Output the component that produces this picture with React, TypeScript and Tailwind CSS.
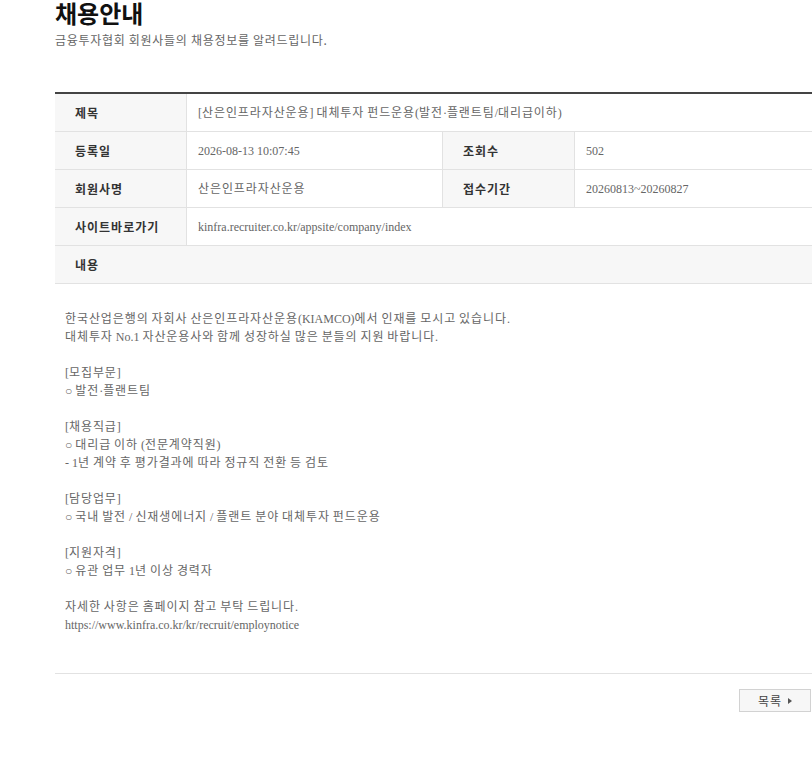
import React from 'react';

const font = 'font-["Liberation_Serif","Noto_Sans_CJK_KR",serif]';
const sans = 'font-["Noto_Sans_CJK_KR","Noto_Sans",sans-serif]';

// 한글 구간만 자간을 살짝 넓혀준다 (원본 폰트 폭 맞추기)
const K: React.FC<{ text: string }> = ({ text }) => (
    <span className="whitespace-pre">
        {text.split(/([\uAC00-\uD7A3\u3131-\u318E]+)/).map((part, i) =>
            /[\uAC00-\uD7A3\u3131-\u318E]/.test(part) ? (
                <span key={i} className="tracking-[0.9px]">{part}</span>
            ) : (
                <React.Fragment key={i}>{part}</React.Fragment>
            )
        )}
    </span>
);

const Label: React.FC<{ children: string }> = ({ children }) => (
    <div className={`h-[38px] flex items-center pl-[20px] bg-[#f7f7f7] border-b border-r border-[#e2e2e2] text-[12px] tracking-[1px] font-bold text-[#333] ${sans}`}>
        {children}
    </div>
);

const Value: React.FC<{ children: string; span?: boolean; noRight?: boolean }> = ({ children, span, noRight }) => (
    <div className={`h-[38px] flex items-center pl-[11px] border-b border-[#e2e2e2] text-[12px] text-[#666] ${font} ${span ? 'col-span-3' : ''} ${noRight ? '' : 'border-r'}`}>
        <K text={children} />
    </div>
);

const lines = [
    '한국산업은행의 자회사 산은인프라자산운용(KIAMCO)에서 인재를 모시고 있습니다.',
    '대체투자 No.1 자산운용사와 함께 성장하실 많은 분들의 지원 바랍니다.',
    '',
    '[모집부문]',
    '○ 발전·플랜트팀',
    '',
    '[채용직급]',
    '○ 대리급 이하 (전문계약직원)',
    '- 1년 계약 후 평가결과에 따라 정규직 전환 등 검토',
    '',
    '[담당업무]',
    '○ 국내 발전 / 신재생에너지 / 플랜트 분야 대체투자 펀드운용',
    '',
    '[지원자격]',
    '○ 유관 업무 1년 이상 경력자',
    '',
    '자세한 사항은 홈페이지 참고 부탁 드립니다.',
    'https://www.kinfra.co.kr/kr/recruit/employnotice',
];

export default function App() {
    return (
        <div className="w-[812px] h-[767px] bg-white overflow-hidden">
            <div className="ml-[55px] w-[757px]">
                {/* 제목 영역 */}
                <h1 className={`pt-[1px] text-[24px] leading-[24px] font-bold text-[#111] ${sans}`}>채용안내</h1>
                <p className={`mt-[6px] text-[12px] leading-[18px] tracking-[0.7px] text-[#666] ${sans}`}>
                    금융투자협회 회원사들의 채용정보를 알려드립니다.
                </p>

                {/* 상세 테이블 */}
                <div className="mt-[43px] border-t-2 border-[#444] grid grid-cols-[132px_256px_132px_1fr]">
                    <Label>제목</Label>
                    <Value span noRight>[산은인프라자산운용] 대체투자 펀드운용(발전·플랜트팀/대리급이하)</Value>

                    <Label>등록일</Label>
                    <Value>2026-08-13 10:07:45</Value>
                    <Label>조회수</Label>
                    <Value noRight>502</Value>

                    <Label>회원사명</Label>
                    <Value>산은인프라자산운용</Value>
                    <Label>접수기간</Label>
                    <Value noRight>20260813~20260827</Value>

                    <Label>사이트바로가기</Label>
                    <Value span noRight>kinfra.recruiter.co.kr/appsite/company/index</Value>

                    <div className={`col-span-4 h-[38px] flex items-center pl-[20px] bg-[#f7f7f7] border-b border-[#e2e2e2] text-[12px] tracking-[1px] font-bold text-[#333] ${sans}`}>
                        내용
                    </div>
                </div>

                {/* 내용 */}
                <div className={`pt-[26px] pb-[39px] pl-[10px] text-[12px] leading-[18px] text-[#666] border-b border-[#e2e2e2] ${font}`}>
                    {lines.map((l, i) => (
                        <div key={i} className="h-[18px]">
                            <K text={l} />
                        </div>
                    ))}
                </div>

                <div className="flex justify-end mt-[15px] pr-[1px]">
                    <button className={`w-[72px] h-[23px] flex items-center justify-center gap-[6px] border border-[#d2d2d2] bg-[#f7f7f7] text-[12px] tracking-[1px] text-[#444] ${sans}`}>
                        목록
                        <svg width="4" height="6" viewBox="0 0 4 6"><path d="M0 0 L4 3 L0 6 Z" fill="#555" /></svg>
                    </button>
                </div>
            </div>
        </div>
    );
}
